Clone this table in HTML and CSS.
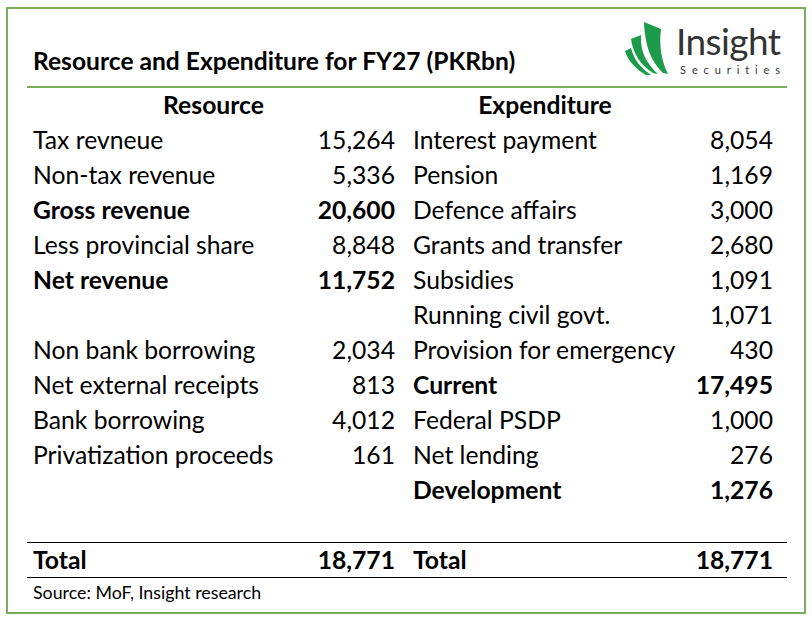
FILE: index.html
```html
<!DOCTYPE html>
<html lang="en">
<head>
<meta charset="utf-8">
<title>Resource and Expenditure for FY27</title>
<link rel="stylesheet" href="styles.css">
</head>
<body>
<div class="frame">
  <div class="head">
    <div class="title">Resource and Expenditure for FY27 (PKRbn)</div>
    <div class="logo">
      <svg class="mark" width="50" height="56" viewBox="0 0 50 56">
        <path d="M22 2 L39 9 C37 25 39 40 46 54 L41 53 C30 42 23 28 22 2 Z" fill="#1e9a4b"/>
        <path d="M9 19 L19 15 C18 32 25 44 36 54 L31 53 C18 45 11 33 9 19 Z" fill="#1e9a4b"/>
        <path d="M3 31 L9 28 C12 40 19 48 29 55 L24 55 C14 49 6 41 3 31 Z" fill="#1e9a4b"/>
      </svg>
      <div class="brand">
        <div class="brand-name">Insight</div>
        <div class="brand-sub">Securities</div>
      </div>
    </div>
  </div>

  <div class="grid">
    <div class="hd hd-left">Resource</div>
    <div class="hd hd-right">Expenditure</div>
    <div class="hd"></div>

    <div class="l1">Tax revneue</div><div class="n1">15,264</div><div class="l2">Interest payment</div><div class="n2">8,054</div>
    <div class="l1">Non-tax revenue</div><div class="n1">5,336</div><div class="l2">Pension</div><div class="n2">1,169</div>
    <div class="l1 b">Gross revenue</div><div class="n1 b">20,600</div><div class="l2">Defence affairs</div><div class="n2">3,000</div>
    <div class="l1">Less provincial share</div><div class="n1">8,848</div><div class="l2">Grants and transfer</div><div class="n2">2,680</div>
    <div class="l1 b">Net revenue</div><div class="n1 b">11,752</div><div class="l2">Subsidies</div><div class="n2">1,091</div>
    <div class="l1"></div><div class="n1"></div><div class="l2">Running civil govt.</div><div class="n2">1,071</div>
    <div class="l1">Non bank borrowing</div><div class="n1">2,034</div><div class="l2">Provision for emergency</div><div class="n2">430</div>
    <div class="l1">Net external receipts</div><div class="n1">813</div><div class="l2 b">Current</div><div class="n2 b">17,495</div>
    <div class="l1">Bank borrowing</div><div class="n1">4,012</div><div class="l2">Federal PSDP</div><div class="n2">1,000</div>
    <div class="l1">Privatization proceeds</div><div class="n1">161</div><div class="l2">Net lending</div><div class="n2">276</div>
    <div class="l1"></div><div class="n1"></div><div class="l2 b">Development</div><div class="n2 b">1,276</div>
    <div class="spacer"></div>
  </div>

  <div class="grid total">
    <div class="l1 b">Total</div><div class="n1 b">18,771</div><div class="l2 b">Total</div><div class="n2 b">18,771</div>
  </div>

  <div class="source">Source: MoF, Insight research</div>
</div>
</body>
</html>
```

FILE: styles.css
```css
html, body {
  margin: 0;
  padding: 0;
  background: #ffffff;
}

body {
  font-family: "Lato", "Liberation Sans", sans-serif;
  color: #000000;
}

.frame {
  box-sizing: border-box;
  width: 800px;
  height: 607px;
  margin: 7px 0 0 6px;
  border: 2px solid #78ae5a;
  padding: 0 17px 0 19px;
}

.head {
  display: flex;
  justify-content: space-between;
  align-items: flex-end;
  height: 77px;
  border-bottom: 2px solid #78ae5a;
}

.title {
  font-size: 24.6px;
  font-weight: 700;
  line-height: 30px;
  padding: 0 0 10px 6px;
  white-space: nowrap;
}

.logo {
  align-self: flex-start;
  display: flex;
  align-items: flex-start;
  margin-top: 11px;
  margin-right: 1px;
}

.mark {
  display: block;
  margin-right: 4px;
}

.brand {
  display: flex;
  flex-direction: column;
  color: #333333;
}

.brand-name {
  font-size: 37px;
  line-height: 36px;
  margin-top: 3px;
  letter-spacing: -0.6px;
}

.brand-sub {
  font-size: 11px;
  line-height: 12px;
  letter-spacing: 5.9px;
  margin-top: 5px;
  padding-left: 4px;
}

.grid {
  display: grid;
  grid-template-columns: 273px 100px 290px 97px;
  grid-auto-rows: 35px;
  grid-template-rows: 34px;
  font-size: 24.7px;
  line-height: 35px;
  white-space: nowrap;
}

.hd {
  font-weight: 700;
  text-align: center;
  line-height: 34px;
}

.hd-left {
  grid-column: 1 / 3;
}

.hd-right {
  grid-column: 3 / 4;
}

.l1 {
  padding-left: 6px;
}

.n1 {
  text-align: right;
  padding-right: 5px;
}

.l2 {
  padding-left: 13px;
}

.n2 {
  text-align: right;
  padding-right: 14px;
}

.b {
  font-weight: 700;
}

.spacer {
  grid-column: 1 / 5;
}

.total {
  grid-template-rows: 34px;
  border-top: 1px solid #000000;
  border-bottom: 1px solid #000000;
}

.total > div {
  line-height: 34px;
}

.source {
  font-size: 17.8px;
  line-height: 28px;
  padding-left: 6px;
}
```
